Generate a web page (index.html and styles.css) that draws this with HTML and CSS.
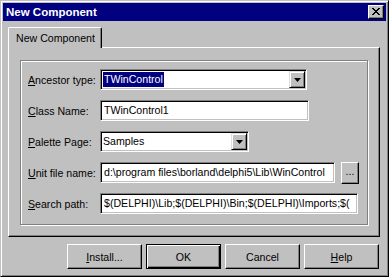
FILE: index.html
```html
<!DOCTYPE html>
<html lang="en">
<head>
  <meta charset="UTF-8" />
  <title>New Component</title>
  <link rel="stylesheet" href="styles.css">
</head>
<body>
  <div class="window">
    <div class="titlebar">
      <span class="title">New Component</span>
      <div class="close">
        <svg width="8" height="7" viewBox="0 0 8 7" shape-rendering="crispEdges">
          <path d="M0 0h2v1h1v1h2v-1h1v-1h2v1h-1v1h-1v1h-1v1h1v1h1v1h1v1h-2v-1h-1v-1h-2v1h-1v1h-2v-1h1v-1h1v-1h1v-1h-1v-1h-1v-1h-1z" fill="#000"/>
        </svg>
      </div>
    </div>

    <div class="client">
      <div class="tabs">
        <div class="tab">New Component</div>
      </div>

      <div class="panel">
        <div class="group">
          <label><u>A</u>ncestor type:</label>
          <div class="field combo wide">
            <span class="value"><span class="selected">TWinControl</span></span>
            <span class="drop"><svg width="7" height="4" viewBox="0 0 7 4"><polygon points="0,0 7,0 3.5,4" fill="#000"/></svg></span>
          </div>

          <label><u>C</u>lass Name:</label>
          <div class="field edit class-name">TWinControl1</div>

          <label><u>P</u>alette Page:</label>
          <div class="field combo short">
            <span class="value">Samples</span>
            <span class="drop"><svg width="7" height="4" viewBox="0 0 7 4"><polygon points="0,0 7,0 3.5,4" fill="#000"/></svg></span>
          </div>

          <label><u>U</u>nit file name:</label>
          <div class="with-browse">
            <div class="field edit unit">d:\program files\borland\delphi5\Lib\WinControl</div>
            <div class="btn browse">...</div>
          </div>

          <label><u>S</u>earch path:</label>
          <div class="field edit search">$(DELPHI)\Lib;$(DELPHI)\Bin;$(DELPHI)\Imports;$(</div>
        </div>
      </div>

      <div class="buttons">
        <div class="btn"><u>I</u>nstall...</div>
        <div class="btn default">OK</div>
        <div class="btn">Cancel</div>
        <div class="btn"><u>H</u>elp</div>
      </div>
    </div>
  </div>
</body>
</html>
```

FILE: styles.css
```css
body {
  margin: 0;
  background: #c0c0c0;
  font-family: "Liberation Sans", Arial, sans-serif;
  font-size: 10.6px;
  color: #000;
}

.window {
  width: 389px;
  height: 277px;
  box-sizing: border-box;
  padding: 2px;
  background: #c0c0c0;
  border: 1px solid;
  border-color: #c0c0c0 #000 #000 #c0c0c0;
  box-shadow: inset 1px 1px 0 #fff, inset -1px -1px 0 #808080;
}

.titlebar {
  height: 18px;
  background: #000080;
  color: #fff;
  display: flex;
  align-items: center;
  justify-content: space-between;
  padding-left: 3px;
}

.title {
  font-weight: bold;
  font-size: 11.5px;
}

.close {
  width: 16px;
  height: 14px;
  box-sizing: border-box;
  margin-right: 2px;
  background: #c0c0c0;
  border: 1px solid;
  border-color: #fff #000 #000 #fff;
  box-shadow: inset -1px -1px 0 #808080;
  display: flex;
  align-items: center;
  justify-content: center;
  padding: 0 1px 1px 0;
}

.client {
  padding: 6px 6px 0 5px;
}

.tabs {
  display: flex;
}

.tab {
  position: relative;
  z-index: 1;
  width: 94px;
  height: 21px;
  box-sizing: border-box;
  margin-bottom: -1px;
  padding: 4px 0 0 7px;
  background: #c0c0c0;
  border: 1px solid;
  border-bottom: none;
  border-color: #fff #000 #c0c0c0 #fff;
  border-radius: 2px 2px 0 0;
  box-shadow: inset -1px 0 0 #808080;
}

.panel {
  height: 190px;
  box-sizing: border-box;
  padding: 12px 11px 0;
  border: 1px solid;
  border-color: #fff #000 #000 #fff;
  box-shadow: inset -1px -1px 0 #808080;
}

.group {
  height: 165px;
  box-sizing: border-box;
  padding: 8px 0 0 7px;
  border: 1px solid #808080;
  box-shadow: inset 1px 1px 0 #fff, 1px 1px 0 #fff;
  display: grid;
  grid-template-columns: 72px 1fr;
  grid-auto-rows: 21px;
  row-gap: 10px;
  align-items: center;
}

.field {
  height: 21px;
  box-sizing: border-box;
  background: #fff;
  border: 1px solid;
  border-color: #808080 #fff #fff #808080;
  box-shadow: inset 1px 1px 0 #000, inset -1px -1px 0 #c0c0c0;
  white-space: nowrap;
  overflow: hidden;
}

.edit {
  line-height: 19px;
  padding-left: 3px;
}

.combo {
  display: flex;
  padding: 1px;
}

.combo .value {
  flex: 1;
  line-height: 17px;
  padding-left: 1px;
}

.selected {
  background: #000080;
  color: #fff;
  padding: 0 1px;
  display: inline-block;
  line-height: 15px;
}

.drop {
  width: 16px;
  height: 17px;
  box-sizing: border-box;
  background: #c0c0c0;
  border: 1px solid;
  border-color: #dfdfdf #000 #000 #dfdfdf;
  box-shadow: inset 1px 1px 0 #fff, inset -1px -1px 0 #808080;
  display: flex;
  align-items: center;
  justify-content: center;
}

.wide { width: 207px; }
.short { width: 149px; }
.class-name { width: 209px; }
.unit { width: 235px; }
.search { width: 258px; }

.with-browse {
  display: flex;
  align-items: center;
  gap: 6px;
}

.btn {
  width: 75px;
  height: 25px;
  box-sizing: border-box;
  background: #c0c0c0;
  border: 1px solid;
  border-color: #fff #000 #000 #fff;
  box-shadow: inset -1px -1px 0 #808080;
  display: flex;
  align-items: center;
  justify-content: center;
}

.btn.browse {
  width: 18px;
  height: 22px;
  padding-bottom: 3px;
}

.btn.default {
  border-color: #000;
  box-shadow: inset 1px 1px 0 #fff, inset -1px -1px 0 #000, inset -2px -2px 0 #808080;
}

.buttons {
  display: flex;
  justify-content: flex-end;
  gap: 4px;
  margin-top: 7px;
  padding-right: 1px;
}
```
